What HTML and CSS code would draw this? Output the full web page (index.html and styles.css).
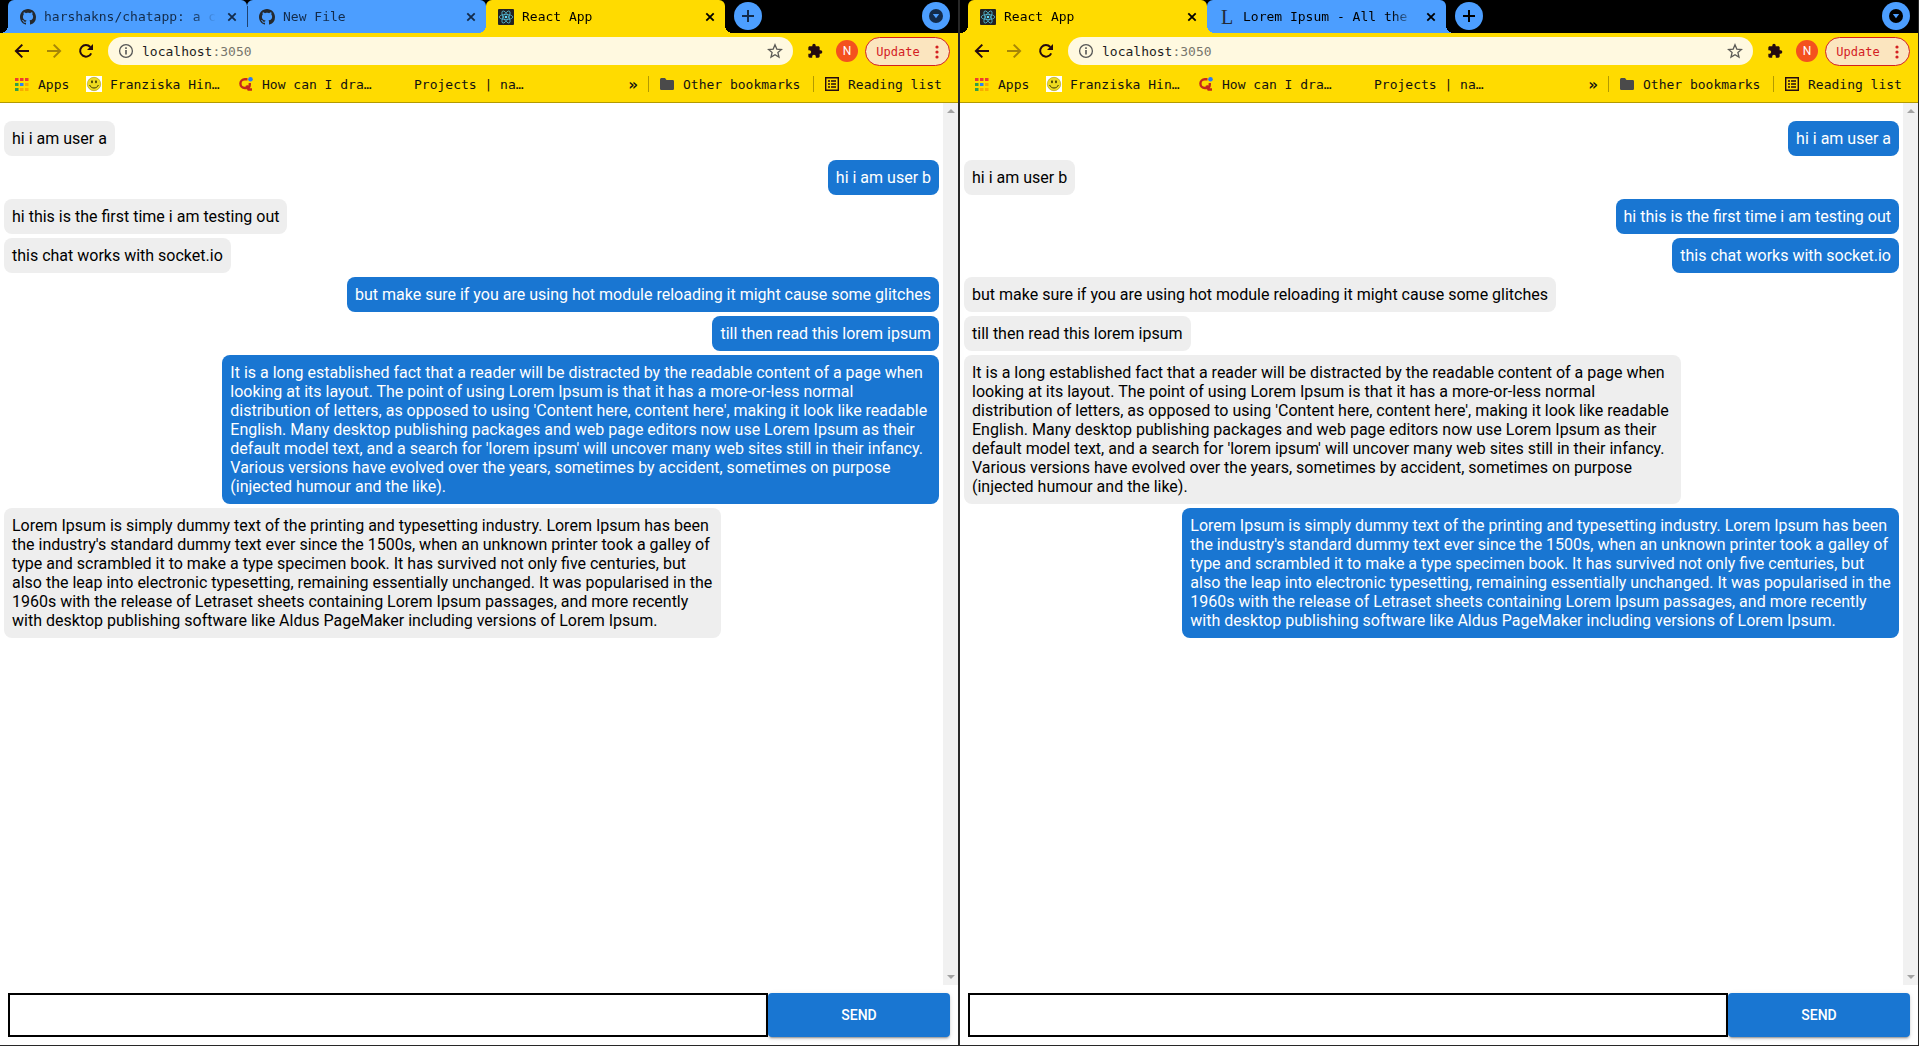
FILE: index.html
```html
<!DOCTYPE html>
<html lang="en">
<head>
<meta charset="utf-8">
<title>React App</title>
<link rel="stylesheet" href="styles.css">
</head>
<body>
<svg class="sprite" aria-hidden="true">
  <symbol id="github" viewBox="0 0 16 16"><path d="M8 0C3.58 0 0 3.58 0 8c0 3.54 2.29 6.53 5.47 7.59.4.07.55-.17.55-.38 0-.19-.01-.82-.01-1.49-2.01.37-2.53-.49-2.69-.94-.09-.23-.48-.94-.82-1.13-.28-.15-.68-.52-.01-.53.63-.01 1.08.58 1.23.82.72 1.21 1.87.87 2.33.66.07-.52.28-.87.51-1.07-1.78-.2-3.64-.89-3.64-3.95 0-.87.31-1.59.82-2.15-.08-.2-.36-1.02.08-2.12 0 0 .67-.21 2.2.82.64-.18 1.32-.27 2-.27s1.36.09 2 .27c1.53-1.04 2.2-.82 2.2-.82.44 1.1.16 1.92.08 2.12.51.56.82 1.27.82 2.15 0 3.07-1.87 3.75-3.65 3.95.29.25.54.73.54 1.48 0 1.07-.01 1.93-.01 2.2 0 .21.15.46.55.38A8.01 8.01 0 0 0 16 8c0-4.42-3.58-8-8-8z" fill="#24292e"/></symbol>
  <symbol id="react" viewBox="0 0 16 16"><rect width="16" height="16" rx="1" fill="#222"/><g fill="none" stroke="#53b9d3" stroke-width=".8"><ellipse cx="8" cy="8" rx="6.8" ry="2.6"/><ellipse cx="8" cy="8" rx="6.8" ry="2.6" transform="rotate(60 8 8)"/><ellipse cx="8" cy="8" rx="6.8" ry="2.6" transform="rotate(120 8 8)"/></g><circle cx="8" cy="8" r="1.3" fill="#61dafb"/></symbol>
  <symbol id="close" viewBox="0 0 16 16"><path d="M4.3 4.3l7.4 7.4M11.7 4.3l-7.4 7.4" stroke="currentColor" stroke-width="1.8"/></symbol>
  <symbol id="plus" viewBox="0 0 28 28"><path d="M14 8v12M8 14h12" stroke="currentColor" stroke-width="2"/></symbol>
  <symbol id="caret" viewBox="0 0 28 28"><circle cx="14" cy="14" r="7" fill="currentColor"/><path d="M10.8 12h6.4L14 16.3z" fill="#4c9eff"/></symbol>
  <symbol id="back" viewBox="0 0 16 16"><path d="M15 8H2.5M8.3 1.6L1.9 8l6.4 6.4" fill="none" stroke="currentColor" stroke-width="2"/></symbol>
  <symbol id="reload" viewBox="0 0 16 16"><path d="M13.2 10.3A5.8 5.8 0 1 1 12.3 4" fill="none" stroke="currentColor" stroke-width="2"/><path d="M15 1v6H9z" fill="currentColor"/></symbol>
  <symbol id="info" viewBox="0 0 16 16"><circle cx="8" cy="8" r="6.4" fill="none" stroke="#555" stroke-width="1.3"/><path d="M8 7v4.4M8 4.3v1.6" stroke="#555" stroke-width="1.6"/></symbol>
  <symbol id="star" viewBox="0 0 16 16"><path d="M8 1.8l1.8 4.3 4.7.4-3.6 3 1.1 4.6L8 11.7l-4 2.4 1.1-4.6-3.6-3 4.7-.4z" fill="none" stroke="#5c5b56" stroke-width="1.3"/></symbol>
  <symbol id="puzzle" viewBox="0 0 24 24"><path d="M20.5 11H19V7c0-1.1-.9-2-2-2h-4V3.500a2.500 2.500 0 0 0-5 0V5H4c-1.100 0-1.990.9-1.990 2v3.800H3.500c1.490 0 2.700 1.210 2.700 2.700s-1.210 2.700-2.700 2.700H2V20c0 1.100.9 2 2 2h3.800v-1.500c0-1.490 1.210-2.700 2.700-2.700s2.700 1.210 2.700 2.700V22H17c1.100 0 2-.9 2-2v-4h1.500a2.500 2.500 0 0 0 0-5z" fill="currentColor"/></symbol>
  <symbol id="apps" viewBox="0 0 16 16"><path d="M1 2h3.500v3H1zM6 2h3.500v3H6zM11 2h3.500v3H11z" fill="#ee3c2e"/><path d="M1 7h3.500v3H1zM1 12h3.500v3H1z" fill="#34a047"/><path d="M6 7h3.500v3H6z" fill="#2b84f3"/><path d="M11 7h3.500v3H11zM6 12h3.500v3H6zM11 12h3.500v3H11z" fill="#f9ab00"/></symbol>
  <symbol id="smiley" viewBox="0 0 16 16"><path d="M0 0h16v16H0z" fill="#fff"/><circle cx="8" cy="8" r="6.700" fill="#eedb20" stroke="#a99a16" stroke-width=".6"/><ellipse cx="6" cy="5.800" rx=".9" ry="1.500" fill="#3a3405"/><ellipse cx="10" cy="5.800" rx=".9" ry="1.500" fill="#3a3405"/><path d="M3.600 9c1.600 4 7.200 4 8.800 0" fill="none" stroke="#3a3405"/></symbol>
  <symbol id="quora" viewBox="0 0 16 16"><path d="M9.500 3.200H6.800a4.400 4.400 0 0 0 0 8.800h1.400c2.200 0 3.600-1.400 3.600-3.600V7M8.500 9.500l2 4H14" fill="none" stroke="#c5281c" stroke-width="2.400"/><circle cx="12.500" cy="3.200" r="2.300" fill="#2b7cf6"/></symbol>
  <symbol id="blank" viewBox="0 0 16 16"></symbol>
  <symbol id="folder" viewBox="0 0 16 16"><path d="M1 3.500Q1 2 2.400 2H6l1.500 2h6.200Q15 4 15 5.300v7.400Q15 14 13.700 14H2.300Q1 14 1 12.700z" fill="#4a4a4a"/></symbol>
  <symbol id="list" viewBox="0 0 16 16"><path d="M1.700 1.700h12.600v12.600H1.700z" fill="none" stroke="#240a10" stroke-width="1.400"/><path d="M4 5h2M7 5h5M4 8h2M7 8h5M4 11h2M7 11h5" stroke="#240a10" stroke-width="1.400"/></symbol>
  <symbol id="dots" viewBox="0 0 4 14"><circle cx="2" cy="2" r="1.600" fill="#d3201f"/><circle cx="2" cy="7" r="1.600" fill="#d3201f"/><circle cx="2" cy="12" r="1.600" fill="#d3201f"/></symbol>
</svg>

<main class="desktop">
  <section class="window window-inactive">
    <div class="tabs">
      <div class="tab"><svg class="icon"><use href="#github"/></svg><span class="tab-title">harshakns/chatapp: a c</span><button class="tab-close" aria-label="Close tab"><svg class="icon"><use href="#close"/></svg></button></div>
      <div class="tab tab-divided"><svg class="icon"><use href="#github"/></svg><span class="tab-title">New File</span><button class="tab-close" aria-label="Close tab"><svg class="icon"><use href="#close"/></svg></button></div>
      <div class="tab tab-active"><svg class="icon"><use href="#react"/></svg><span class="tab-title">React App</span><button class="tab-close" aria-label="Close tab"><svg class="icon"><use href="#close"/></svg></button></div>
      <button class="round new-tab" aria-label="New tab"><svg><use href="#plus"/></svg></button>
      <button class="round tab-search" aria-label="Search tabs"><svg><use href="#caret"/></svg></button>
    </div>
    <nav class="toolbar">
      <button class="tool" aria-label="Back"><svg class="icon"><use href="#back"/></svg></button>
      <button class="tool forward" aria-label="Forward"><svg class="icon"><use href="#back"/></svg></button>
      <button class="tool" aria-label="Reload"><svg class="icon"><use href="#reload"/></svg></button>
      <div class="address"><svg class="icon"><use href="#info"/></svg><input class="host" type="text" value="localhost" aria-label="Address"><span class="port">:3050</span><button class="bookmark-star" aria-label="Bookmark this tab"><svg class="icon"><use href="#star"/></svg></button></div>
      <button class="tool" aria-label="Extensions"><svg class="icon"><use href="#puzzle"/></svg></button>
      <button class="tool" aria-label="Profile"><span class="avatar">N</span></button>
      <button class="update">Update<svg class="dots"><use href="#dots"/></svg></button>
    </nav>
    <nav class="bookmarks">
      <a class="bookmark bookmark-short" href="#"><svg class="icon"><use href="#apps"/></svg><span>Apps</span></a>
      <a class="bookmark" href="#"><svg class="icon"><use href="#smiley"/></svg><span>Franziska Hin…</span></a>
      <a class="bookmark" href="#"><svg class="icon"><use href="#quora"/></svg><span>How can I dra…</span></a>
      <a class="bookmark" href="#"><svg class="icon"><use href="#blank"/></svg><span>Projects | na…</span></a>
      <div class="bookmarks-end">
        <button class="more" aria-label="More bookmarks">»</button>
        <a class="bookmark bookmark-other" href="#"><svg class="icon"><use href="#folder"/></svg><span>Other bookmarks</span></a>
        <a class="bookmark bookmark-reading" href="#"><svg class="icon"><use href="#list"/></svg><span>Reading list</span></a>
      </div>
    </nav>
    <div class="viewport">
      <div class="messages">
        <p class="message">hi i am user a</p>
        <p class="message mine">hi i am user b</p>
        <p class="message">hi this is the first time i am testing out</p>
        <p class="message">this chat works with socket.io</p>
        <p class="message mine">but make sure if you are using hot module reloading it might cause some glitches</p>
        <p class="message mine">till then read this lorem ipsum</p>
        <p class="message mine">It is a long established fact that a reader will be distracted by the readable content of a page when looking at its layout. The point of using Lorem Ipsum is that it has a more-or-less normal distribution of letters, as opposed to using 'Content here, content here', making it look like readable English. Many desktop publishing packages and web page editors now use Lorem Ipsum as their default model text, and a search for 'lorem ipsum' will uncover many web sites still in their infancy. Various versions have evolved over the years, sometimes by accident, sometimes on purpose (injected humour and the like).</p>
        <p class="message">Lorem Ipsum is simply dummy text of the printing and typesetting industry. Lorem Ipsum has been the industry's standard dummy text ever since the 1500s, when an unknown printer took a galley of type and scrambled it to make a type specimen book. It has survived not only five centuries, but also the leap into electronic typesetting, remaining essentially unchanged. It was popularised in the 1960s with the release of Letraset sheets containing Lorem Ipsum passages, and more recently with desktop publishing software like Aldus PageMaker including versions of Lorem Ipsum.</p>
      </div>
      <div class="scrollbar" aria-hidden="true"><i class="arrow arrow-up"></i><i class="arrow arrow-down"></i></div>
    </div>
    <form class="composer"><input class="composer-input" type="text" aria-label="Message"><button class="send" type="button">SEND</button></form>
  </section>

  <section class="window">
    <div class="tabs">
      <div class="tab tab-active"><svg class="icon"><use href="#react"/></svg><span class="tab-title">React App</span><button class="tab-close" aria-label="Close tab"><svg class="icon"><use href="#close"/></svg></button></div>
      <div class="tab"><span class="icon letter-icon" aria-hidden="true">L</span><span class="tab-title">Lorem Ipsum - All the </span><button class="tab-close" aria-label="Close tab"><svg class="icon"><use href="#close"/></svg></button></div>
      <button class="round new-tab" aria-label="New tab"><svg><use href="#plus"/></svg></button>
      <button class="round tab-search" aria-label="Search tabs"><svg><use href="#caret"/></svg></button>
    </div>
    <nav class="toolbar">
      <button class="tool" aria-label="Back"><svg class="icon"><use href="#back"/></svg></button>
      <button class="tool forward" aria-label="Forward"><svg class="icon"><use href="#back"/></svg></button>
      <button class="tool" aria-label="Reload"><svg class="icon"><use href="#reload"/></svg></button>
      <div class="address"><svg class="icon"><use href="#info"/></svg><input class="host" type="text" value="localhost" aria-label="Address"><span class="port">:3050</span><button class="bookmark-star" aria-label="Bookmark this tab"><svg class="icon"><use href="#star"/></svg></button></div>
      <button class="tool" aria-label="Extensions"><svg class="icon"><use href="#puzzle"/></svg></button>
      <button class="tool" aria-label="Profile"><span class="avatar">N</span></button>
      <button class="update">Update<svg class="dots"><use href="#dots"/></svg></button>
    </nav>
    <nav class="bookmarks">
      <a class="bookmark bookmark-short" href="#"><svg class="icon"><use href="#apps"/></svg><span>Apps</span></a>
      <a class="bookmark" href="#"><svg class="icon"><use href="#smiley"/></svg><span>Franziska Hin…</span></a>
      <a class="bookmark" href="#"><svg class="icon"><use href="#quora"/></svg><span>How can I dra…</span></a>
      <a class="bookmark" href="#"><svg class="icon"><use href="#blank"/></svg><span>Projects | na…</span></a>
      <div class="bookmarks-end">
        <button class="more" aria-label="More bookmarks">»</button>
        <a class="bookmark bookmark-other" href="#"><svg class="icon"><use href="#folder"/></svg><span>Other bookmarks</span></a>
        <a class="bookmark bookmark-reading" href="#"><svg class="icon"><use href="#list"/></svg><span>Reading list</span></a>
      </div>
    </nav>
    <div class="viewport">
      <div class="messages">
        <p class="message mine">hi i am user a</p>
        <p class="message">hi i am user b</p>
        <p class="message mine">hi this is the first time i am testing out</p>
        <p class="message mine">this chat works with socket.io</p>
        <p class="message">but make sure if you are using hot module reloading it might cause some glitches</p>
        <p class="message">till then read this lorem ipsum</p>
        <p class="message">It is a long established fact that a reader will be distracted by the readable content of a page when looking at its layout. The point of using Lorem Ipsum is that it has a more-or-less normal distribution of letters, as opposed to using 'Content here, content here', making it look like readable English. Many desktop publishing packages and web page editors now use Lorem Ipsum as their default model text, and a search for 'lorem ipsum' will uncover many web sites still in their infancy. Various versions have evolved over the years, sometimes by accident, sometimes on purpose (injected humour and the like).</p>
        <p class="message mine">Lorem Ipsum is simply dummy text of the printing and typesetting industry. Lorem Ipsum has been the industry's standard dummy text ever since the 1500s, when an unknown printer took a galley of type and scrambled it to make a type specimen book. It has survived not only five centuries, but also the leap into electronic typesetting, remaining essentially unchanged. It was popularised in the 1960s with the release of Letraset sheets containing Lorem Ipsum passages, and more recently with desktop publishing software like Aldus PageMaker including versions of Lorem Ipsum.</p>
      </div>
      <div class="scrollbar" aria-hidden="true"><i class="arrow arrow-up"></i><i class="arrow arrow-down"></i></div>
    </div>
    <form class="composer"><input class="composer-input" type="text" aria-label="Message"><button class="send" type="button">SEND</button></form>
  </section>
</main>
</body>
</html>
```
FILE: styles.css
```css
:root {
  --yellow: #ffdb00;
  --blue: #4c9eff;
  --ink: #240a10;
  --primary: #1976d2;
  --edge: #282828;
}

* { box-sizing: border-box; }

body {
  margin: 0;
  font-family: "DejaVu Sans Mono", "Liberation Mono", monospace;
  font-size: 13px;
}

button {
  display: flex;
  align-items: center;
  justify-content: center;
  padding: 0;
  border: 0;
  background: none;
  color: inherit;
  font: inherit;
}

input { font: inherit; }
a { color: inherit; text-decoration: none; }
.sprite { display: none; }

.icon {
  display: block;
  flex: none;
  width: 16px;
  height: 16px;
}

.desktop {
  display: grid;
  grid-template-columns: repeat(2, minmax(0, 1fr));
  gap: 2px;
  min-height: 100vh;
  padding: 0 1px 1px 0;
  background: var(--edge);
}

.window {
  --tab-ink: #000;
  display: flex;
  flex-direction: column;
  background: #fff;
}

.window-inactive { --tab-ink: #132b4a; }

/* Tab strip */
.tabs {
  display: flex;
  height: 33px;
  padding: 0 8px;
  background: #000;
}

.tab {
  position: relative;
  display: flex;
  align-items: center;
  gap: 8px;
  flex: 0 1 239px;
  min-width: 0;
  padding: 0 7px 0 12px;
  border-radius: 6px 6px 0 0;
  background: var(--tab);
  color: var(--tab-ink);
  --tab: var(--blue);
}

.tab-active {
  z-index: 1;
  color: #000;
  --tab: var(--yellow);
}

.tab::before,
.tab::after {
  content: "";
  position: absolute;
  bottom: 0;
  width: 8px;
  height: 8px;
}

.tab::before {
  right: 100%;
  background: radial-gradient(circle at 0 0, transparent 8px, var(--tab) 8px);
}

.tab::after {
  left: 100%;
  background: radial-gradient(circle at 100% 0, transparent 8px, var(--tab) 8px);
}

.tab-divided::before {
  right: auto;
  left: 0;
  bottom: 6px;
  width: 1px;
  height: 21px;
  background: #1f4270;
}

.tab-title {
  flex: 1;
  overflow: hidden;
  white-space: pre;
  -webkit-mask-image: linear-gradient(to left, transparent, #000 24px);
  mask-image: linear-gradient(to left, transparent, #000 24px);
}

.letter-icon {
  color: #222b38;
  font: 20px/16px "Liberation Serif", serif;
  text-align: center;
}

.round {
  width: 28px;
  height: 28px;
  margin-top: 2px;
  border-radius: 50%;
  background: var(--blue);
  color: var(--tab-ink);
}

.round svg { width: 28px; height: 28px; }
.new-tab { margin-left: 9px; }
.tab-search { margin-left: auto; }

/* Toolbar */
.toolbar {
  display: flex;
  align-items: flex-start;
  gap: 4px;
  padding: 4px 8px;
  background: var(--yellow);
  color: var(--ink);
}

.tool { width: 28px; height: 28px; }
.forward { opacity: .4; transform: rotate(180deg); }

.address {
  display: flex;
  align-items: center;
  flex: 1;
  min-width: 0;
  height: 28px;
  margin: 0 4px;
  padding: 0 10px;
  border-radius: 14px;
  background: #fff9e0;
}

.host {
  width: 9ch;
  margin-left: 8px;
  padding: 0;
  border: 0;
  background: none;
  color: #1c1c1c;
  outline: 0;
}

.port { color: #77756c; }
.bookmark-star { margin-left: auto; }

.avatar {
  width: 22px;
  border-radius: 50%;
  background: #f4511e;
  color: #fff;
  font: 12px/22px Roboto, sans-serif;
}

.update {
  gap: 15px;
  width: 85px;
  height: 29px;
  border: 1px solid #d3201f;
  border-radius: 15px;
  background: #fbe5bf;
  color: #d3201f;
  font-size: 12px;
}

.dots { width: 4px; height: 14px; }

/* Bookmarks bar */
.bookmarks {
  display: flex;
  gap: 16px;
  height: 33px;
  padding: 0 15px 4px 14px;
  border-bottom: 1px solid #b39a00;
  background: var(--yellow);
  color: #111;
}

.bookmark {
  display: flex;
  align-items: center;
  gap: 8px;
}

.bookmark span { width: 112px; white-space: nowrap; }
.bookmark-short span { width: 32px; }

.bookmarks-end {
  display: flex;
  align-items: center;
  gap: 10px;
  margin-left: auto;
}

.bookmarks-end .bookmark {
  height: 16px;
  padding-left: 10px;
  border-left: 1px solid #b39a00;
}

.bookmarks-end .bookmark-other span { width: 120px; }
.bookmarks-end .bookmark-reading span { width: 95px; }
.more { font-size: 16px; font-weight: 700; }

/* Chat */
.viewport {
  display: flex;
  flex: 1;
}

.messages {
  display: flex;
  flex-direction: column;
  align-items: flex-start;
  gap: 4px;
  flex: 1;
  min-width: 0;
  padding: 18px 0;
  font: 16px/19px Roboto, sans-serif;
}

.message {
  max-width: 76%;
  margin: 0 4px;
  padding: 8px;
  border-radius: 8px;
  background: #eee;
  color: #000;
}

.mine {
  align-self: flex-end;
  background: var(--primary);
  color: #fff;
}

.scrollbar {
  display: flex;
  flex-direction: column;
  align-items: center;
  justify-content: space-between;
  width: 15px;
  padding: 6px 0;
  background: #f1f1f1;
}

.arrow {
  border: 4px solid transparent;
}

.arrow-up { border-top: 0; border-bottom-color: #a3a3a3; }
.arrow-down { border-bottom: 0; border-top-color: #a3a3a3; }

.composer {
  display: flex;
  padding: 8px;
}

.composer-input {
  flex: 1;
  min-width: 0;
  height: 44px;
  padding: 0 8px;
  border: 2px solid #000;
  background: #fff;
  font: 16px/19px Roboto, sans-serif;
}

.send {
  width: 182px;
  border-radius: 4px;
  background: var(--primary);
  box-shadow: 0 3px 1px -2px rgba(0, 0, 0, .2), 0 2px 2px rgba(0, 0, 0, .14), 0 1px 5px rgba(0, 0, 0, .12);
  color: #fff;
  font: 500 14px/24px Roboto, sans-serif;
}
```
